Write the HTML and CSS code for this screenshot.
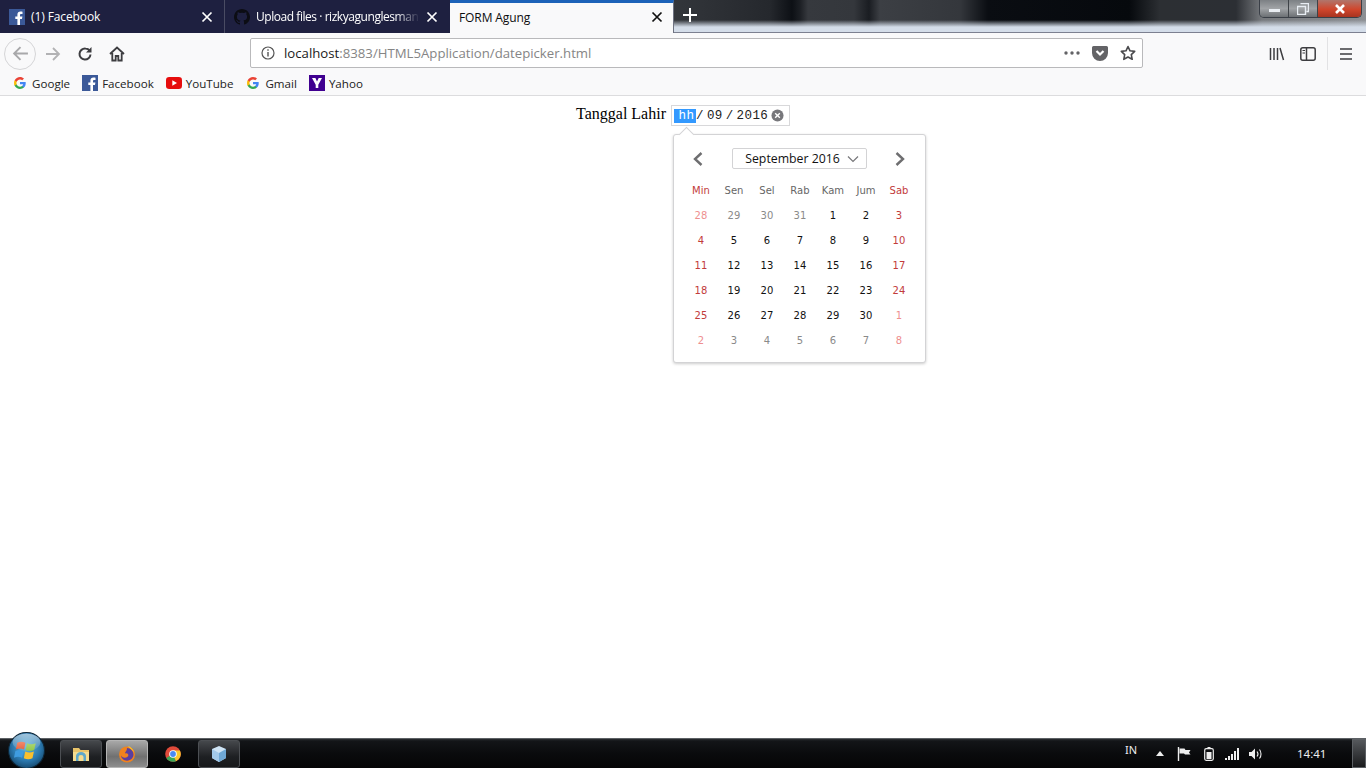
FILE: index.html
```html
<!DOCTYPE html>
<html>
	<head>
		<meta http-equiv="content-type" content="text/html;charset=UTF-8" />
		<title>FORM Agung</title>
		<link rel="stylesheet" href="styles.css">
	</head>

	<body>
		<div class="window">
			<div class="tabBar">
				<div class="tab">
					<svg class="favicon" viewBox="0 0 16 16"><rect width="16" height="16" fill="#3b5998"/><path d="M11 16V10h2l.4-2.4H11V6.200c0-.8.3-1.200 1.200-1.200h1.300V2.800C13 2.700 12.300 2.600 11.500 2.600 9.600 2.600 8.400 3.800 8.400 5.800v1.800H6.300V10h2.100v6z" fill="#fff"/></svg>
					<span class="tabTitle">(1) Facebook</span>
					<svg class="tabClose" viewBox="0 0 12 12"><path d="M1.5 1.5l9 9M10.5 1.5l-9 9" stroke="#fff" stroke-width="1.7"/></svg>
				</div>
				<div class="tab">
					<svg class="favicon" viewBox="0 0 16 16"><path d="M8 0C3.600 0 0 3.600 0 8c0 3.500 2.300 6.500 5.500 7.600.4.100.5-.2.500-.4v-1.400c-2.200.5-2.700-1-2.700-1-.4-.9-.9-1.200-.9-1.200-.7-.5.100-.5.100-.5.800.1 1.200.8 1.200.8.700 1.200 1.900.9 2.300.7.100-.5.300-.9.500-1.100-1.800-.2-3.600-.9-3.600-4 0-.9.300-1.600.8-2.100-.1-.2-.4-1 .1-2.100 0 0 .7-.2 2.200.8a7.600 7.600 0 014 0c1.500-1 2.200-.8 2.200-.8.400 1.100.2 1.900.1 2.100.5.600.8 1.300.8 2.100 0 3.100-1.900 3.700-3.700 3.900.3.300.6.800.6 1.500v2.200c0 .2.100.5.600.4C13.700 14.500 16 11.500 16 8c0-4.400-3.600-8-8-8z" fill="#0c0d14"/></svg>
					<span class="tabTitle tabFade">Upload files · rizkyagunglesman</span>
					<svg class="tabClose" viewBox="0 0 12 12"><path d="M1.5 1.5l9 9M10.5 1.5l-9 9" stroke="#fff" stroke-width="1.7"/></svg>
				</div>
				<div class="tab active">
					<span class="tabTitle">FORM Agung</span>
					<svg class="tabClose" viewBox="0 0 12 12"><path d="M1.5 1.5l9 9M10.5 1.5l-9 9" stroke="#111" stroke-width="1.7"/></svg>
				</div>
				<svg class="newTab" viewBox="0 0 14 14"><path d="M7 0v14M0 7h14" stroke="#fff" stroke-width="2"/></svg>
			</div>
			<div class="winButtons">
				<div class="winBtn winMin"><span class="minBar"></span></div>
				<div class="winBtn winMax"><svg viewBox="0 0 12 12" width="12" height="12"><path d="M3.5.5h8v8h-2M.5 3.5h8v8h-8z" fill="none" stroke="#e8edf3" stroke-width="1.4"/></svg></div>
				<div class="winBtn winClose"><svg viewBox="0 0 12 10" width="12" height="10"><path d="M2 1l8 8M10 1l-8 8" stroke="#fff" stroke-width="2.6"/></svg></div>
			</div>

			<div class="navBar">
				<div class="backBtn">
					<svg viewBox="0 0 16 16" width="17" height="17"><path d="M15 8H2M8 2L2 8l6 6" fill="none" stroke="#a8a8aa" stroke-width="1.8"/></svg>
				</div>
				<svg class="navIcon fwd" viewBox="0 0 16 16"><path d="M1 8h13M8 2l6 6-6 6" fill="none" stroke="#b2b2b4" stroke-width="1.8"/></svg>
				<svg class="navIcon reload" viewBox="0 0 16 16"><path d="M13.500 8.500A5.500 5.500 0 118.500 2.600c1.800 0 3.300.8 4.500 2.400" fill="none" stroke="#3d3d40" stroke-width="2"/><path d="M14.500 1v5.500H9z" fill="#3d3d40"/></svg>
				<svg class="navIcon home" viewBox="0 0 16 16"><path d="M1 8l7-6.500L15 8M3.300 7v7.500h3.400V10h2.600v4.500h3.400V7" fill="none" stroke="#3d3d40" stroke-width="1.8"/></svg>
				<div class="urlBar">
					<svg class="urlInfo" viewBox="0 0 14 14"><circle cx="7" cy="7" r="6" fill="none" stroke="#555" stroke-width="1.2"/><path d="M7 6v4.500M7 3.200v1.500" stroke="#555" stroke-width="1.4"/></svg>
					<span class="url"><span class="urlHost">localhost</span>:8383/HTML5Application/datepicker.html</span>
					<svg class="urlDots" viewBox="0 0 16 4"><circle cx="2" cy="2" r="1.7"/><circle cx="8" cy="2" r="1.7"/><circle cx="14" cy="2" r="1.7"/></svg>
					<svg class="urlPocket" viewBox="0 0 16 15"><path d="M1.500 0h13A1.500 1.500 0 0116 1.500V7A8 8 0 010 7V1.500A1.500 1.500 0 011.500 0z" fill="#636366"/><path d="M4.500 5L8 8.500 11.500 5" fill="none" stroke="#fff" stroke-width="2.2"/></svg>
					<svg class="urlStar" viewBox="0 0 16 16"><path d="M8 1.500l2 4.300 4.700.6-3.400 3.200.9 4.700L8 12l-4.200 2.300.9-4.700L1.300 6.400 6 5.800z" fill="none" stroke="#4a4a4d" stroke-width="1.6" stroke-linejoin="round"/></svg>
				</div>
				<svg class="toolIcon lib" viewBox="0 0 16 16"><path d="M1.500 2v12M5 2v12M8.500 2v12M11 2l3.500 12" fill="none" stroke="#3d3d40" stroke-width="1.5"/></svg>
				<svg class="toolIcon side" viewBox="0 0 16 16"><rect x=".8" y="1.800" width="14.400" height="12.400" rx="2" fill="none" stroke="#3d3d40" stroke-width="1.5"/><path d="M6.500 2v12" stroke="#3d3d40" stroke-width="1.5"/><path d="M2.500 4.500h2.500M2.500 7h2.500" stroke="#3d3d40"/></svg>
				<span class="toolSep"></span>
				<svg class="toolIcon menu" viewBox="0 0 16 16"><path d="M2 3h12M2 8h12M2 13h12" stroke="#3d3d40" stroke-width="1.7"/></svg>
			</div>

			<div class="bookmarks">
				<div class="mark"><svg class="gIcon" viewBox="0 0 18 18"><path d="M17.600 9.200c0-.6-.1-1.200-.2-1.800H9v3.500h4.800c-.2 1.100-.8 2-1.800 2.700v2.200h2.900c1.700-1.600 2.700-3.900 2.700-6.600z" fill="#4285f4"/><path d="M9 18c2.400 0 4.500-.8 5.900-2.200L12 13.600c-.8.500-1.800.9-3 .9-2.300 0-4.300-1.600-5-3.700H1v2.300C2.500 16 5.500 18 9 18z" fill="#34a853"/><path d="M4 10.800c-.4-1.100-.4-2.400 0-3.600V4.900H1C-.3 7.400-.3 10.600 1 13.100z" fill="#fbbc05"/><path d="M9 3.600c1.300 0 2.500.5 3.400 1.300L15 2.400C13.400.900 11.300 0 9 0 5.500 0 2.500 2 1 4.900l3 2.300c.700-2.100 2.700-3.600 5-3.600z" fill="#ea4335"/></svg><span>Google</span></div>
				<div class="mark"><svg class="fbIcon" viewBox="0 0 16 16"><rect width="16" height="16" fill="#3b5998"/><path d="M11 16V10h2l.4-2.400H11V6.200c0-.8.3-1.200 1.200-1.200h1.300V2.800C13 2.700 12.300 2.600 11.500 2.600 9.600 2.600 8.400 3.800 8.400 5.800v1.800H6.300V10h2.100v6z" fill="#fff"/></svg><span>Facebook</span></div>
				<div class="mark wide"><svg class="ytIcon" viewBox="0 0 16 12"><rect width="16" height="12" rx="3.200" fill="#e60d0d"/><path d="M6.300 3.300v5.400L11 6z" fill="#fff"/></svg><span>YouTube</span></div>
				<div class="mark"><svg class="gIcon" viewBox="0 0 18 18"><path d="M17.600 9.200c0-.6-.1-1.200-.2-1.800H9v3.500h4.800c-.2 1.100-.8 2-1.800 2.700v2.200h2.900c1.700-1.600 2.700-3.900 2.700-6.600z" fill="#4285f4"/><path d="M9 18c2.400 0 4.500-.8 5.900-2.200L12 13.600c-.8.500-1.800.9-3 .9-2.300 0-4.300-1.600-5-3.700H1v2.300C2.500 16 5.500 18 9 18z" fill="#34a853"/><path d="M4 10.800c-.4-1.100-.4-2.400 0-3.600V4.900H1C-.3 7.400-.3 10.600 1 13.100z" fill="#fbbc05"/><path d="M9 3.600c1.300 0 2.500.5 3.400 1.300L15 2.400C13.400.900 11.300 0 9 0 5.500 0 2.500 2 1 4.900l3 2.300c.700-2.100 2.700-3.600 5-3.600z" fill="#ea4335"/></svg><span>Gmail</span></div>
				<div class="mark"><svg class="fbIcon" viewBox="0 0 16 16"><rect width="16" height="16" fill="#400090"/><path d="M3 3h3.400L8 6.600 9.700 3H13L9.300 9.800V13H6.700V9.800z" fill="#fff"/></svg><span>Yahoo</span></div>
			</div>

			<div class="content">
				<form class="formRow">
					<span class="label">Tanggal Lahir</span>
					<div class="dateField">
						<div class="dateInput">
							<span class="dateSel">hh</span>
							<span class="dateRest"><span>/</span><span>09</span><span>/</span><span>2016</span></span>
							<svg class="clearIcon" viewBox="0 0 14 14"><circle cx="7" cy="7" r="6.5" fill="#77777b"/><path d="M4.500 4.500l5 5M9.500 4.500l-5 5" stroke="#fff" stroke-width="1.5"/></svg>
						</div>
						<div class="picker">
							<span class="pickerArrow"></span>
							<div class="pickerHead">
								<svg class="pickerNav" viewBox="0 0 12 16"><path d="M9.500 2L3 8l6.500 6" fill="none" stroke="#6e6e70" stroke-width="2.4"/></svg>
								<div class="monthSel">September 2016
									<svg class="monthArrow" viewBox="0 0 12 8"><path d="M1 1.500l5 5 5-5" fill="none" stroke="#77777a" stroke-width="1.2"/></svg>
								</div>
								<svg class="pickerNav" viewBox="0 0 12 16"><path d="M2.500 2L9 8l-6.500 6" fill="none" stroke="#6e6e70" stroke-width="2.4"/></svg>
							</div>
							<div class="calGrid">
								<span class="dayName wkend">Min</span><span class="dayName">Sen</span><span class="dayName">Sel</span><span class="dayName">Rab</span><span class="dayName">Kam</span><span class="dayName">Jum</span><span class="dayName wkend">Sab</span>
								<span class="day wkendOut">28</span><span class="day out">29</span><span class="day out">30</span><span class="day out">31</span><span class="day">1</span><span class="day">2</span><span class="day wkend">3</span>
								<span class="day wkend">4</span><span class="day">5</span><span class="day">6</span><span class="day">7</span><span class="day">8</span><span class="day">9</span><span class="day wkend">10</span>
								<span class="day wkend">11</span><span class="day">12</span><span class="day">13</span><span class="day">14</span><span class="day">15</span><span class="day">16</span><span class="day wkend">17</span>
								<span class="day wkend">18</span><span class="day">19</span><span class="day">20</span><span class="day">21</span><span class="day">22</span><span class="day">23</span><span class="day wkend">24</span>
								<span class="day wkend">25</span><span class="day">26</span><span class="day">27</span><span class="day">28</span><span class="day">29</span><span class="day">30</span><span class="day wkendOut">1</span>
								<span class="day wkendOut">2</span><span class="day out">3</span><span class="day out">4</span><span class="day out">5</span><span class="day out">6</span><span class="day out">7</span><span class="day wkendOut">8</span>
							</div>
						</div>
					</div>
				</form>
			</div>

			<div class="taskbar">
				<svg class="startOrb" viewBox="0 0 36 36">
					<defs>
						<radialGradient id="orb" cx="50%" cy="40%" r="65%"><stop offset="0" stop-color="#5fb4dc"/><stop offset=".6" stop-color="#2a77ad"/><stop offset="1" stop-color="#123f60"/></radialGradient>
						<linearGradient id="gloss" x1="0" y1="0" x2="0" y2="1"><stop offset="0" stop-color="#fff" stop-opacity=".55"/><stop offset="1" stop-color="#fff" stop-opacity=".05"/></linearGradient>
					</defs>
					<circle cx="18" cy="18" r="17.5" fill="url(#orb)" stroke="#0d2536"/>
					<path d="M9 10.500c3-1.300 5-1.300 8 0l-1.400 6.500c-2.800-1.200-5-1.200-8 0z" fill="#e8562e"/>
					<path d="M18.500 11c3 1.300 5.200 1.300 8.500 0l-1.500 6.500c-3 1.200-5.200 1.200-8.300 0z" fill="#8cc63f"/>
					<path d="M7.200 18.500c3-1.200 5.200-1.200 8 0L13.800 25c-2.800-1.200-5-1.200-8 0z" fill="#3f9ce0"/>
					<path d="M16.800 19c3 1.200 5.300 1.200 8.400 0L23.800 25.500c-3 1.200-5.300 1.200-8.400 0z" fill="#fbc02d"/>
					<ellipse cx="18" cy="10" rx="13.500" ry="8.500" fill="url(#gloss)"/>
				</svg>
				<div class="taskBtn">
					<svg class="taskIcon" viewBox="0 0 18 18"><path d="M1 3h6l1.500 2H17v11H1z" fill="#e9c46a"/><path d="M1 7h16v9H1z" fill="#f5dc8f"/><path d="M4 16v-5a5 4 0 0110 0v5h-2.500v-4a2.500 2 0 00-5 0v4z" fill="#5fa8c9"/></svg>
				</div>
				<div class="taskBtn current">
					<svg class="taskIcon" viewBox="0 0 18 18"><circle cx="9" cy="9.500" r="8" fill="#f0821e"/><path d="M9 3a6.500 6.500 0 016.500 6.500c0 3-2.500 6-6.500 6.200-3.400 0-5.800-2.600-6-5.200 1 1.500 2.400 2.300 4 2.200C10 12.500 11 10.500 10 9c-1-.8-2.600-.4-3-1.200C7.500 6.500 9 6 9 3z" fill="#5a3fa0"/><path d="M10 1c3 1 6 4 6.500 8 0-1-1-3-3-4.500C12 3 11 2.500 10 1z" fill="#fcd12a"/></svg>
				</div>
				<div class="taskBtn plain">
					<svg class="taskIcon" viewBox="0 0 18 18"><circle cx="9" cy="9" r="7.800" fill="#e04a3a"/><path d="M9 9L2.300 13a7.800 7.800 0 006.700 3.800 7.800 7.800 0 003-.6z" fill="#3aa757"/><path d="M9 5.500h6.900A7.800 7.800 0 0112 16.200L9 9z" fill="#fbc62d"/><circle cx="9" cy="9" r="3.800" fill="#fff"/><circle cx="9" cy="9" r="2.900" fill="#4a8af4"/></svg>
				</div>
				<div class="taskBtn">
					<svg class="taskIcon" viewBox="0 0 18 18"><path d="M9 1l7 3v9l-7 4-7-4V4z" fill="#cfe4f5"/><path d="M9 8l7-4v9l-7 4z" fill="#6fa8d6"/><path d="M9 8L2 4v9l7 4z" fill="#a3c9ea"/></svg>
				</div>
				<div class="tray">
					<span class="trayLang">IN</span>
					<svg class="trayUp" viewBox="0 0 8 5"><path d="M4 0l4 5H0z" fill="#eee"/></svg>
					<svg class="trayFlag" viewBox="0 0 14 14"><path d="M1.500 0v14" stroke="#eee" stroke-width="1.4"/><path d="M2.500 1.500h5l1 1.500h5L12 5.500l1.500 2H8l-1-1H2.500z" fill="#eee"/></svg>
					<svg class="trayBatt" viewBox="0 0 10 14"><path d="M3.500 0h3v1.500h-3z" fill="#eee"/><rect x=".7" y="1.700" width="8.600" height="11.600" rx="1.500" fill="none" stroke="#eee" stroke-width="1.2"/><rect x="2.500" y="5" width="5" height="7" fill="#eee"/></svg>
					<svg class="traySignal" viewBox="0 0 14 12"><path d="M0 10h2v2H0zM3 8h2v4H3zM6 6h2v6H6zM9 3h2v9H9zM12 0h2v12h-2z" fill="#eee"/></svg>
					<svg class="traySound" viewBox="0 0 14 14"><path d="M0 5h2.500L6 1.500v11L2.500 9H0z" fill="#eee"/><path d="M8 4.500c1.200 1.500 1.200 3.500 0 5M10.500 2.500c2 2.500 2 6.500 0 9" fill="none" stroke="#eee" stroke-width="1.1"/></svg>
					<span class="trayClock">14:41</span>
					<span class="showDesk"></span>
				</div>
			</div>
		</div>
	</body>
</html>
```

FILE: styles.css
```css
html,body{
	margin: 0;
	padding: 0;
	height: 100%;
	overflow: hidden;
}
body{
	background-color: #fff;
}
.window{
	position: relative;
	width: 1366px;
	height: 768px;
	display: flex;
	flex-direction: column;
	font-family: "Open Sans", "Noto Sans", sans-serif;
}
/* tab strip, wallpaper shows through on the right */
.tabBar{
	height: 33px;
	flex-shrink: 0;
	display: flex;
	align-items: flex-start;
	background-color: #1a1d22;
	background-image:
		linear-gradient(to bottom, rgba(212,221,233,0) 0, rgba(212,221,233,0) 20px, rgba(212,221,233,1) 27px, rgba(212,221,233,1) 32px, #7c8090 32px),
		linear-gradient(to right, #33363b 674px, #25282d 770px, #0d1015 792px, #1c1f24 800px, #36393e 808px, #34373c 854px, #1a1d22 869px, #3c3f44 880px, #34373c 960px, #0a0d12 988px, #06090d 1129px, #2c2f33 1160px, #2c2f34 1236px, #777a7e 1262px, #8c8f93 1366px);
}
.tab{
	width: 224px;
	height: 33px;
	box-sizing: border-box;
	padding: 0 11px 0 9px;
	display: flex;
	align-items: center;
	background-color: #1e2040;
	border-right: solid 1px #4a4c63;
	color: #fff;
	font-size: 12px;
	letter-spacing: -0.1px;
}
.tab:first-child{
	width: 225px;
}
.tab:nth-child(2){
	width: 225px;
	border-right: 0;
	padding-right: 12px;
}
.tab.active{
	background-color: #f9f9fa;
	border-top: solid 3px #1c62b8;
	border-right: solid 1px #6d7180;
	color: #0c0c0d;
	padding: 0 10px 3px 9px;
	height: 34px;
}
.favicon{
	width: 16px;
	height: 16px;
	margin-right: 6px;
	flex-shrink: 0;
}
.tabTitle{
	flex-grow: 1;
	white-space: nowrap;
	overflow: hidden;
	min-width: 0;
}
.tabFade{
	letter-spacing: -0.45px;
	-webkit-mask-image: linear-gradient(to right, #000 85%, transparent 100%);
	mask-image: linear-gradient(to right, #000 85%, transparent 100%);
}
.tabClose{
	width: 12px;
	height: 12px;
	margin-left: 6px;
	flex-shrink: 0;
}
.newTab{
	width: 14px;
	height: 14px;
	margin: 8px 0 0 9px;
}
.winButtons{
	position: absolute;
	top: 0;
	right: 4px;
	width: 103px;
	height: 18px;
	display: flex;
	border: solid 1px #3a3f47;
	border-top: 0;
	border-radius: 0 0 5px 5px;
	overflow: hidden;
	box-sizing: border-box;
}
.winBtn{
	display: flex;
	align-items: center;
	justify-content: center;
}
.winMin, .winMax{
	width: 28px;
	background: linear-gradient(to bottom, #7c8084, #a0a3a6 50%, #6c7074);
	border-right: solid 1px #3f4348;
}
.winMin .minBar{
	width: 11px;
	height: 3px;
	margin-top: 4px;
	background-color: #e9edf2;
}
.winClose{
	flex-grow: 1;
	background: linear-gradient(to bottom, #b0766c, #d0462c 55%, #a83420);
}
.navBar{
	height: 37px;
	flex-shrink: 0;
	display: flex;
	align-items: center;
	padding-left: 4px;
	background-color: #f9f9fa;
	box-sizing: border-box;
}
.backBtn{
	width: 32px;
	height: 32px;
	margin-top: 4px;
	flex-shrink: 0;
	border: solid 1px #d5d5d7;
	border-radius: 50%;
	box-sizing: border-box;
	display: flex;
	align-items: center;
	justify-content: center;
}
.navIcon{
	width: 16px;
	height: 16px;
	margin-top: 4px;
	flex-shrink: 0;
}
.fwd{
	margin-left: 9px;
}
.reload{
	margin-left: 16px;
}
.home{
	margin-left: 16px;
}
.urlBar{
	width: 893px;
	height: 30px;
	margin: 3px 0 0 125px;
	flex-shrink: 0;
	box-sizing: border-box;
	display: flex;
	align-items: center;
	padding: 0 6px 0 10px;
	background-color: #fff;
	border: solid 1px #b9b9bb;
	border-radius: 2px;
	font-size: 13.2px;
	color: #858585;
}
.urlInfo{
	width: 14px;
	height: 14px;
	margin-right: 9px;
	flex-shrink: 0;
}
.url{
	flex-grow: 1;
	white-space: nowrap;
}
.urlHost{
	color: #1a1a1a;
}
.urlDots{
	width: 16px;
	height: 4px;
	fill: #636366;
}
.urlPocket{
	width: 16px;
	height: 15px;
	margin-left: 12px;
}
.urlStar{
	width: 16px;
	height: 16px;
	margin-left: 12px;
}
.toolIcon{
	width: 16px;
	height: 16px;
	margin-top: 4px;
	flex-shrink: 0;
}
.lib{
	margin-left: 126px;
}
.side{
	margin-left: 15px;
}
.toolSep{
	width: 1px;
	height: 34px;
	margin: 4px 10px 0 11px;
	background-color: #e2e2e4;
}
.bookmarks{
	height: 26px;
	flex-shrink: 0;
	box-sizing: border-box;
	display: flex;
	align-items: center;
	padding-left: 14px;
	background-color: #f9f9fa;
	border-bottom: solid 1px #dcdcde;
	font-size: 11.6px;
	color: #222;
}
.mark{
	display: flex;
	align-items: center;
	margin-right: 12px;
}
.mark.wide{
	margin-right: 14px;
}
.mark svg{
	margin-right: 4px;
}
.mark span{
	padding-top: 2px;
}
.mark .gIcon{
	width: 12px;
	height: 12px;
	margin-right: 6px;
}
.fbIcon{
	width: 16px;
	height: 16px;
}
.ytIcon{
	width: 16px;
	height: 12px;
}
.content{
	flex-grow: 1;
	text-align: center;
	min-height: 0;
}
.formRow{
	display: inline-flex;
	align-items: flex-start;
	margin-top: 9px;
	color: #000;
	font-family: "Liberation Serif", serif;
	font-size: 16px;
}
.label{
	margin-right: 5px;
}
.dateField{
	position: relative;
}
.dateInput{
	width: 119px;
	height: 21px;
	box-sizing: border-box;
	display: flex;
	align-items: center;
	padding-left: 2px;
	background-color: #fff;
	border: solid 1px #d8d8da;
	font-family: "Liberation Mono", monospace;
	font-size: 12.5px;
	letter-spacing: 0.4px;
	color: #222;
	white-space: nowrap;
}
.dateSel{
	width: 22px;
	box-sizing: border-box;
	padding-left: 3px;
	background-color: #3399ff;
	color: #fff;
	line-height: 14px;
	flex-shrink: 0;
}
.dateRest{
	display: flex;
	gap: 3px;
}
.clearIcon{
	width: 13px;
	height: 13px;
	margin-left: 3px;
	flex-shrink: 0;
}
.picker{
	position: absolute;
	top: 29px;
	left: 2px;
	width: 253px;
	height: 229px;
	box-sizing: border-box;
	padding: 13px 11px 0 10.5px;
	background-color: #fff;
	border: solid 1px #d3d3d5;
	border-radius: 3px;
	box-shadow: 0 1px 3px rgba(0,0,0,0.2);
	font-family: "DejaVu Sans", sans-serif;
	z-index: 2;
}
.pickerArrow{
	position: absolute;
	top: -6px;
	left: 7px;
	width: 10px;
	height: 10px;
	background-color: #fff;
	border-left: solid 1px #d3d3d5;
	border-top: solid 1px #d3d3d5;
	transform: rotate(45deg);
}
.pickerHead{
	display: flex;
	align-items: center;
	justify-content: space-between;
	padding: 0 8px;
	height: 21px;
}
.pickerNav{
	width: 12px;
	height: 16px;
}
.monthSel{
	width: 135px;
	height: 21px;
	margin-left: 1px;
	box-sizing: border-box;
	display: flex;
	align-items: center;
	padding-left: 12px;
	border: solid 1px #d3d3d5;
	border-radius: 2px;
	font-family: "Open Sans", sans-serif;
	font-size: 12.3px;
	color: #111;
	white-space: nowrap;
}
.monthArrow{
	width: 12px;
	height: 8px;
	margin-left: 7px;
}
.calGrid{
	display: grid;
	grid-template-columns: repeat(7, 33px);
	grid-auto-rows: 25px;
	margin-top: 9px;
	font-size: 10px;
}
.calGrid span{
	display: flex;
	align-items: center;
	justify-content: center;
}
.dayName{
	color: #666;
}
.day{
	color: #111;
}
.wkend{
	color: #c23b3b;
}
.out{
	color: #8a8a8a;
}
.wkendOut{
	color: #ee8f8f;
}
.taskbar{
	height: 30px;
	flex-shrink: 0;
	box-sizing: border-box;
	display: flex;
	align-items: center;
	padding-left: 8px;
	background: linear-gradient(to bottom, #2b2e31 0, #131518 2px, #0a0b0d 50%, #050506 100%);
	border-top: solid 1px #5c6064;
	overflow: visible;
}
.startOrb{
	width: 37px;
	height: 37px;
	margin: -7px 15px 0 0;
	flex-shrink: 0;
}
.taskBtn{
	width: 42px;
	height: 28px;
	margin-right: 4px;
	box-sizing: border-box;
	display: flex;
	align-items: center;
	justify-content: center;
	border: solid 1px #4c4f53;
	border-radius: 3px;
	background: linear-gradient(to bottom, #45484c, #1e2023 60%, #17181a);
}
.taskBtn.current{
	background: linear-gradient(to bottom, #a8a8a8, #707070 60%, #8e8e8e);
	border-color: #b5b5b5;
}
.taskBtn.plain{
	background: none;
	border-color: transparent;
}
.taskIcon{
	width: 18px;
	height: 18px;
}
.tray{
	margin-left: auto;
	height: 100%;
	display: flex;
	align-items: center;
	color: #eee;
	font-family: "Noto Sans", sans-serif;
	font-size: 11.5px;
}
.trayLang{
	margin-top: -8px;
	font-size: 11px;
}
.trayUp{
	width: 8px;
	height: 5px;
	margin-left: 19px;
}
.trayFlag{
	width: 14px;
	height: 14px;
	margin-left: 13px;
}
.trayBatt{
	width: 10px;
	height: 14px;
	margin-left: 13px;
}
.traySignal{
	width: 14px;
	height: 12px;
	margin-left: 11px;
}
.traySound{
	width: 14px;
	height: 14px;
	margin-left: 10px;
}
.trayClock{
	margin-left: 34px;
	width: 55px;
}
.showDesk{
	width: 14px;
	height: 100%;
	box-sizing: border-box;
	border: solid 1px #5c6064;
	background: linear-gradient(to bottom, #55585c, #1a1b1d);
}
```
